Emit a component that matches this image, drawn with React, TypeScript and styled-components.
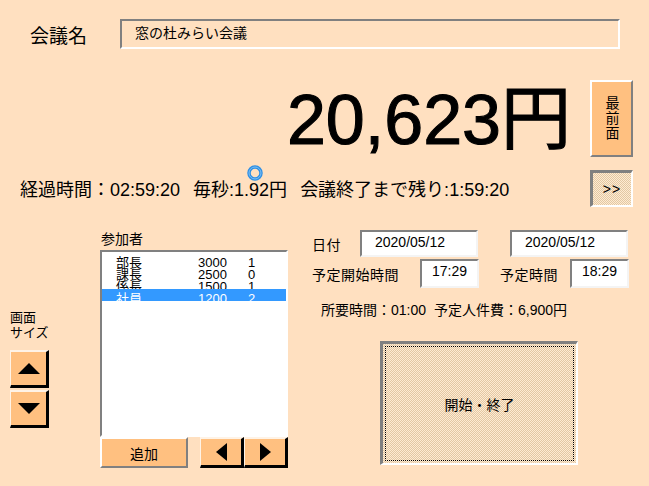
import React from "react";
import styled, { createGlobalStyle, css } from "styled-components";

const PEACH = "#FFE0C0";
const ORANGE = "#FFC080";
const SHADOW = "#808080";
const FONT = `"Liberation Sans", "Noto Sans CJK JP", sans-serif`;

const Global = createGlobalStyle`
  html, body { margin: 0; padding: 0; background: ${PEACH}; }
  body { font-family: ${FONT}; }
`;

const hatch = css`
  background-color: #f2dab8;
  background-image: repeating-conic-gradient(#ffebd2 0 25%, #e2c8a4 0 50%);
  background-size: 2px 2px;
`;

const Screen = styled.div`
  position: relative;
  width: 649px;
  height: 486px;
  overflow: hidden;
  background: ${PEACH};
  color: #000;
  font-family: ${FONT};
  display: flex;
  flex-direction: column;
`;

const Header = styled.div`
  display: flex;
  align-items: center;
  height: 30px;
  margin-top: 19px;
  padding-left: 30px;
`;

const FormLabel = styled.span<{ $size: number; $width?: number }>`
  font-size: ${(p) => p.$size}px;
  width: ${(p) => (p.$width ? `${p.$width}px` : "auto")};
  white-space: nowrap;
  flex: none;
`;

const NameField = styled.div`
  box-sizing: border-box;
  width: 500px;
  height: 30px;
  border-style: solid;
  border-width: 2px;
  border-color: ${SHADOW} #ffffff #ffffff ${SHADOW};
  padding-left: 13px;
  font-size: 14px;
  line-height: 24px;
`;

const AmountRow = styled.div`
  display: flex;
  justify-content: flex-end;
  align-items: flex-start;
  gap: 19px;
  height: 77px;
  margin-top: 31px;
  padding-right: 16px;
`;

const Amount = styled.div`
  font-size: 70px;
  line-height: 77px;
  padding-top: 2px;
  white-space: nowrap;
  -webkit-text-stroke: 1.1px #000;
`;

const buttonBase = css<{ $w: number; $h: number }>`
  box-sizing: border-box;
  width: ${(p) => p.$w}px;
  height: ${(p) => p.$h}px;
  display: flex;
  align-items: center;
  justify-content: center;
  border-style: solid;
  flex: none;
  color: #000;
  font-family: ${FONT};
`;

const RaisedButton = styled.div<{ $w: number; $h: number }>`
  ${buttonBase};
  background: ${ORANGE};
  border-width: 2px;
  border-color: #ffffff ${SHADOW} ${SHADOW} #ffffff;
  font-size: 14px;
`;

const ArrowButton = styled.div<{ $w: number; $h: number }>`
  ${buttonBase};
  background: ${ORANGE};
  border-width: 2px 3px 3px 1px;
  border-color: #fff3e6 #000000 #000000 #fff3e6;
`;

const PressedButton = styled.div<{ $w: number; $h: number }>`
  ${buttonBase};
  ${hatch};
  border-width: 3px 2px 2px 3px;
  border-color: ${SHADOW} #ffffff #ffffff ${SHADOW};
  font-size: 14px;
  font-weight: 300;
  letter-spacing: 1px;
`;

const VerticalText = styled.span`
  writing-mode: vertical-rl;
  text-orientation: upright;
  font-size: 14px;
  letter-spacing: 1px;
`;

const StatusRow = styled.div`
  display: flex;
  align-items: center;
  justify-content: space-between;
  height: 36px;
  margin-top: 13px;
  padding-left: 20px;
  padding-right: 16px;
`;

const StatusText = styled.div`
  display: flex;
  gap: 13px;
  font-size: 18px;
  white-space: nowrap;
`;

const Lower = styled.div`
  display: flex;
  margin-top: 22px;
  padding-left: 10px;
`;

const SizeColumn = styled.div`
  display: flex;
  flex-direction: column;
  width: 39px;
  padding-top: 82px;
`;

const SmallLabel = styled.div`
  font-size: 13px;
  line-height: 15px;
  white-space: nowrap;
`;

const ArrowStack = styled.div`
  display: flex;
  flex-direction: column;
  gap: 2px;
  margin-top: 10px;
`;

const Participants = styled.div`
  display: flex;
  flex-direction: column;
  width: 188px;
  margin-left: 51px;
`;

const SectionLabel = styled.div`
  font-size: 14px;
  line-height: 22px;
  padding-left: 1px;
`;

const ListBox = styled.div`
  box-sizing: border-box;
  width: 188px;
  height: 187px;
  background: #ffffff;
  border-style: solid;
  border-width: 2px;
  border-color: ${SHADOW} #ffffff #ffffff ${SHADOW};
  padding-top: 1px;
`;

const ListRow = styled.div<{ $selected?: boolean }>`
  position: relative;
  display: grid;
  grid-template-columns: 82px 50px 1fr;
  height: 12px;
  line-height: 19px;
  font-size: 13px;
  padding-left: 14px;
  white-space: nowrap;
  background: ${(p) => (p.$selected ? "#3399ff" : "transparent")};
  color: ${(p) => (p.$selected ? "#ffffff" : "#000000")};
`;

const ListButtons = styled.div`
  display: flex;
  gap: 12px;
`;

const ArrowPair = styled.div`
  display: flex;
`;

const InfoPanel = styled.div`
  display: flex;
  flex-direction: column;
  margin-left: 24px;
  padding-top: 2px;
`;

const FieldRow = styled.div<{ $gapTop?: number }>`
  display: flex;
  align-items: center;
  margin-top: ${(p) => p.$gapTop ?? 0}px;
`;

const Field = styled.div<{ $w: number; $h: number; $center?: boolean; $ml?: number }>`
  box-sizing: border-box;
  width: ${(p) => p.$w}px;
  height: ${(p) => p.$h}px;
  margin-left: ${(p) => p.$ml ?? 0}px;
  background: #ffffff;
  border-style: solid;
  border-width: 2px;
  border-color: ${SHADOW} #f4f4f4 #f4f4f4 ${SHADOW};
  font-size: 14px;
  line-height: 20px;
  padding-left: ${(p) => (p.$center ? 0 : 13)}px;
  text-align: ${(p) => (p.$center ? "center" : "left")};
  flex: none;
`;

const InfoLabel = styled.span<{ $w: number; $ml?: number }>`
  width: ${(p) => p.$w}px;
  margin-left: ${(p) => p.$ml ?? 0}px;
  font-size: 14px;
  letter-spacing: 0.5px;
  white-space: nowrap;
  flex: none;
`;

const Summary = styled.div`
  margin-top: 12px;
  margin-left: 9px;
  font-size: 14px;
  line-height: 20px;
  display: flex;
  gap: 8px;
  white-space: nowrap;
`;

const StartButton = styled.div`
  box-sizing: border-box;
  width: 198px;
  height: 124px;
  margin-top: 21px;
  margin-left: 68px;
  padding: 2px;
  ${hatch};
  border-style: solid;
  border-width: 3px 2px 2px 3px;
  border-color: ${SHADOW} #ffffff #ffffff ${SHADOW};
`;

const FocusRect = styled.div`
  box-sizing: border-box;
  width: 100%;
  height: 100%;
  border: 1px dotted #000;
  display: flex;
  align-items: center;
  justify-content: center;
  font-size: 14px;
`;

const BusyCursor = styled.svg`
  position: absolute;
  left: 246px;
  top: 164px;
`;

type Dir = "up" | "down" | "left" | "right";
const Tri = ({ dir }: { dir: Dir }) => {
  const horiz = dir === "up" || dir === "down";
  const w = horiz ? 22 : 11;
  const h = horiz ? 11 : 18;
  const pts =
    dir === "up"
      ? `0,${h} ${w / 2},0 ${w},${h}`
      : dir === "down"
      ? `0,0 ${w},0 ${w / 2},${h}`
      : dir === "left"
      ? `${w},0 ${w},${h} 0,${h / 2}`
      : `0,0 0,${h} ${w},${h / 2}`;
  return (
    <svg width={w} height={h} viewBox={`0 0 ${w} ${h}`}>
      <polygon points={pts} fill="#000" />
    </svg>
  );
};

const members = [
  { name: "部長", rate: "3000", n: "1" },
  { name: "課長", rate: "2500", n: "0" },
  { name: "係長", rate: "1500", n: "1" },
  { name: "社員", rate: "1200", n: "2", selected: true },
];

export default function App() {
  return (
    <>
      <Global />
      <Screen>
        <Header>
          <FormLabel $size={19} $width={90}>会議名</FormLabel>
          <NameField>窓の杜みらい会議</NameField>
        </Header>

        <AmountRow>
          <Amount>20,623円</Amount>
          <RaisedButton $w={43} $h={77}>
            <VerticalText>最前面</VerticalText>
          </RaisedButton>
        </AmountRow>

        <StatusRow>
          <StatusText>
            <span>経過時間：02:59:20</span>
            <span>毎秒:1.92円</span>
            <span>会議終了まで残り:1:59:20</span>
          </StatusText>
          <PressedButton $w={43} $h={37}>&gt;&gt;</PressedButton>
        </StatusRow>

        <Lower>
          <SizeColumn>
            <SmallLabel>
              画面
              <br />
              サイズ
            </SmallLabel>
            <ArrowStack>
              <ArrowButton $w={39} $h={38}>
                <Tri dir="up" />
              </ArrowButton>
              <ArrowButton $w={39} $h={38}>
                <Tri dir="down" />
              </ArrowButton>
            </ArrowStack>
          </SizeColumn>

          <Participants>
            <SectionLabel>参加者</SectionLabel>
            <ListBox>
              {members.map((m) => (
                <ListRow key={m.name} $selected={m.selected}>
                  <span>{m.name}</span>
                  <span>{m.rate}</span>
                  <span>{m.n}</span>
                </ListRow>
              ))}
            </ListBox>
            <ListButtons>
              <RaisedButton $w={88} $h={31}>追加</RaisedButton>
              <ArrowPair>
                <ArrowButton $w={44} $h={31}>
                  <Tri dir="left" />
                </ArrowButton>
                <ArrowButton $w={44} $h={31}>
                  <Tri dir="right" />
                </ArrowButton>
              </ArrowPair>
            </ListButtons>
          </Participants>

          <InfoPanel>
            <FieldRow>
              <InfoLabel $w={48}>日付</InfoLabel>
              <Field $w={118} $h={27}>2020/05/12</Field>
              <Field $w={118} $h={27} $ml={32}>
                2020/05/12
              </Field>
            </FieldRow>
            <FieldRow $gapTop={2}>
              <InfoLabel $w={108}>予定開始時間</InfoLabel>
              <Field $w={59} $h={29} $center>
                17:29
              </Field>
              <InfoLabel $w={70} $ml={21}>
                予定時間
              </InfoLabel>
              <Field $w={59} $h={29} $center>
                18:29
              </Field>
            </FieldRow>
            <Summary>
              <span>所要時間：01:00</span>
              <span>予定人件費：6,900円</span>
            </Summary>
            <StartButton>
              <FocusRect>開始・終了</FocusRect>
            </StartButton>
          </InfoPanel>
        </Lower>

        <BusyCursor width="18" height="18" viewBox="0 0 18 18">
          <circle cx="9" cy="9" r="6" fill="none" stroke="#2f8fe4" strokeWidth="3.5" />
          <circle cx="9" cy="9" r="6" fill="none" stroke="#7cc0f4" strokeWidth="1" />
        </BusyCursor>
      </Screen>
    </>
  );
}
